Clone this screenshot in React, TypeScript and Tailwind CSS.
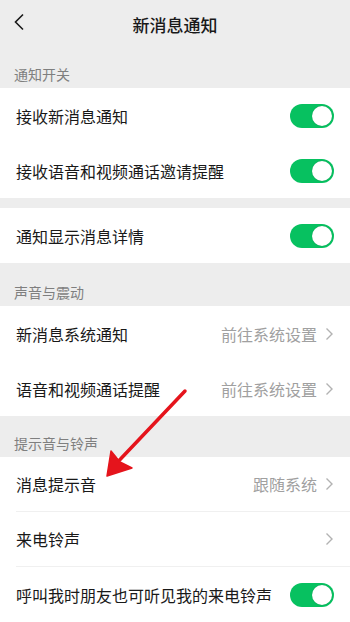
import React from "react";

type Row = {
  label: string;
  toggle?: boolean;
  value?: string;
  chevron?: boolean;
};

const Toggle = () => (
  <div className="flex h-[24px] w-[44px] items-center justify-end rounded-full bg-[#07c160] px-[2px]">
    <div className="h-[20px] w-[20px] rounded-full bg-white shadow-[0_0_1px_rgba(0,0,0,0.3)]" />
  </div>
);

const Chevron = () => (
  <svg width="9" height="14" viewBox="0 0 9 14" className="ml-[8px]">
    <path d="M1.5 1.5 L7 7 L1.5 12.5" fill="none" stroke="#b2b2b2" strokeWidth="1.4" />
  </svg>
);

const SectionLabel = ({ text, h }: { text: string; h: string }) => (
  <div className={`flex items-end px-[14px] pb-[4px] text-[14px] leading-[20px] text-[#7f7f7f] ${h}`}>
    {text}
  </div>
);

const Group = ({ rows, divided }: { rows: Row[]; divided?: boolean }) => (
  <div className="bg-white">
    {rows.map((row, i) => (
      <div key={row.label} className="pl-[16px]">
        <div
          className={`flex h-[55px] items-center pr-[16px] ${
            divided && i < rows.length - 1 ? "border-b border-[#f0f0f0]" : ""
          }`}
        >
          <span className="flex-1 text-[16px] text-[#191919]">{row.label}</span>
          {row.value && <span className="text-[16px] text-[#a0a0a0]">{row.value}</span>}
          {row.chevron && <Chevron />}
          {row.toggle && <Toggle />}
        </div>
      </div>
    ))}
  </div>
);

export default function App() {
  return (
    <div
      className="relative h-[622px] w-[350px] overflow-hidden bg-[#ededed]"
      style={{ fontFamily: '"Noto Sans CJK SC", "Noto Sans", sans-serif' }}
    >
      {/* header */}
      <div className="relative flex h-[50px] items-center justify-center">
        <svg width="12" height="18" viewBox="0 0 12 18" className="absolute left-[13px] top-[13px]">
          <path d="M10 1.5 L2.5 9 L10 16.5" fill="none" stroke="#191919" strokeWidth="1.6" />
        </svg>
        <span className="text-[17px] font-medium text-[#191919]">新消息通知</span>
      </div>

      <SectionLabel text="通知开关" h="h-[38px]" />
      <Group
        rows={[
          { label: "接收新消息通知", toggle: true },
          { label: "接收语音和视频通话邀请提醒", toggle: true },
        ]}
      />
      <div className="h-[10px]" />
      <Group rows={[{ label: "通知显示消息详情", toggle: true }]} />

      <SectionLabel text="声音与震动" h="h-[43px]" />
      <Group
        rows={[
          { label: "新消息系统通知", value: "前往系统设置", chevron: true },
          { label: "语音和视频通话提醒", value: "前往系统设置", chevron: true },
        ]}
      />

      <SectionLabel text="提示音与铃声" h="h-[41px]" />
      <Group
        divided
        rows={[
          { label: "消息提示音", value: "跟随系统", chevron: true },
          { label: "来电铃声", chevron: true },
          { label: "呼叫我时朋友也可听见我的来电铃声", toggle: true },
        ]}
      />

      {/* red annotation arrow */}
      <svg className="pointer-events-none absolute left-0 top-0" width="350" height="622" viewBox="0 0 350 622">
        <path d="M185 391 L112 468" stroke="#e5141c" strokeWidth="3.5" strokeLinecap="round" fill="none" />
        <path d="M107 476 L111 451 L120 462 L132 468 Z" fill="#e5141c" stroke="#e5141c" strokeWidth="1.5" strokeLinejoin="round" />
      </svg>
    </div>
  );
}
